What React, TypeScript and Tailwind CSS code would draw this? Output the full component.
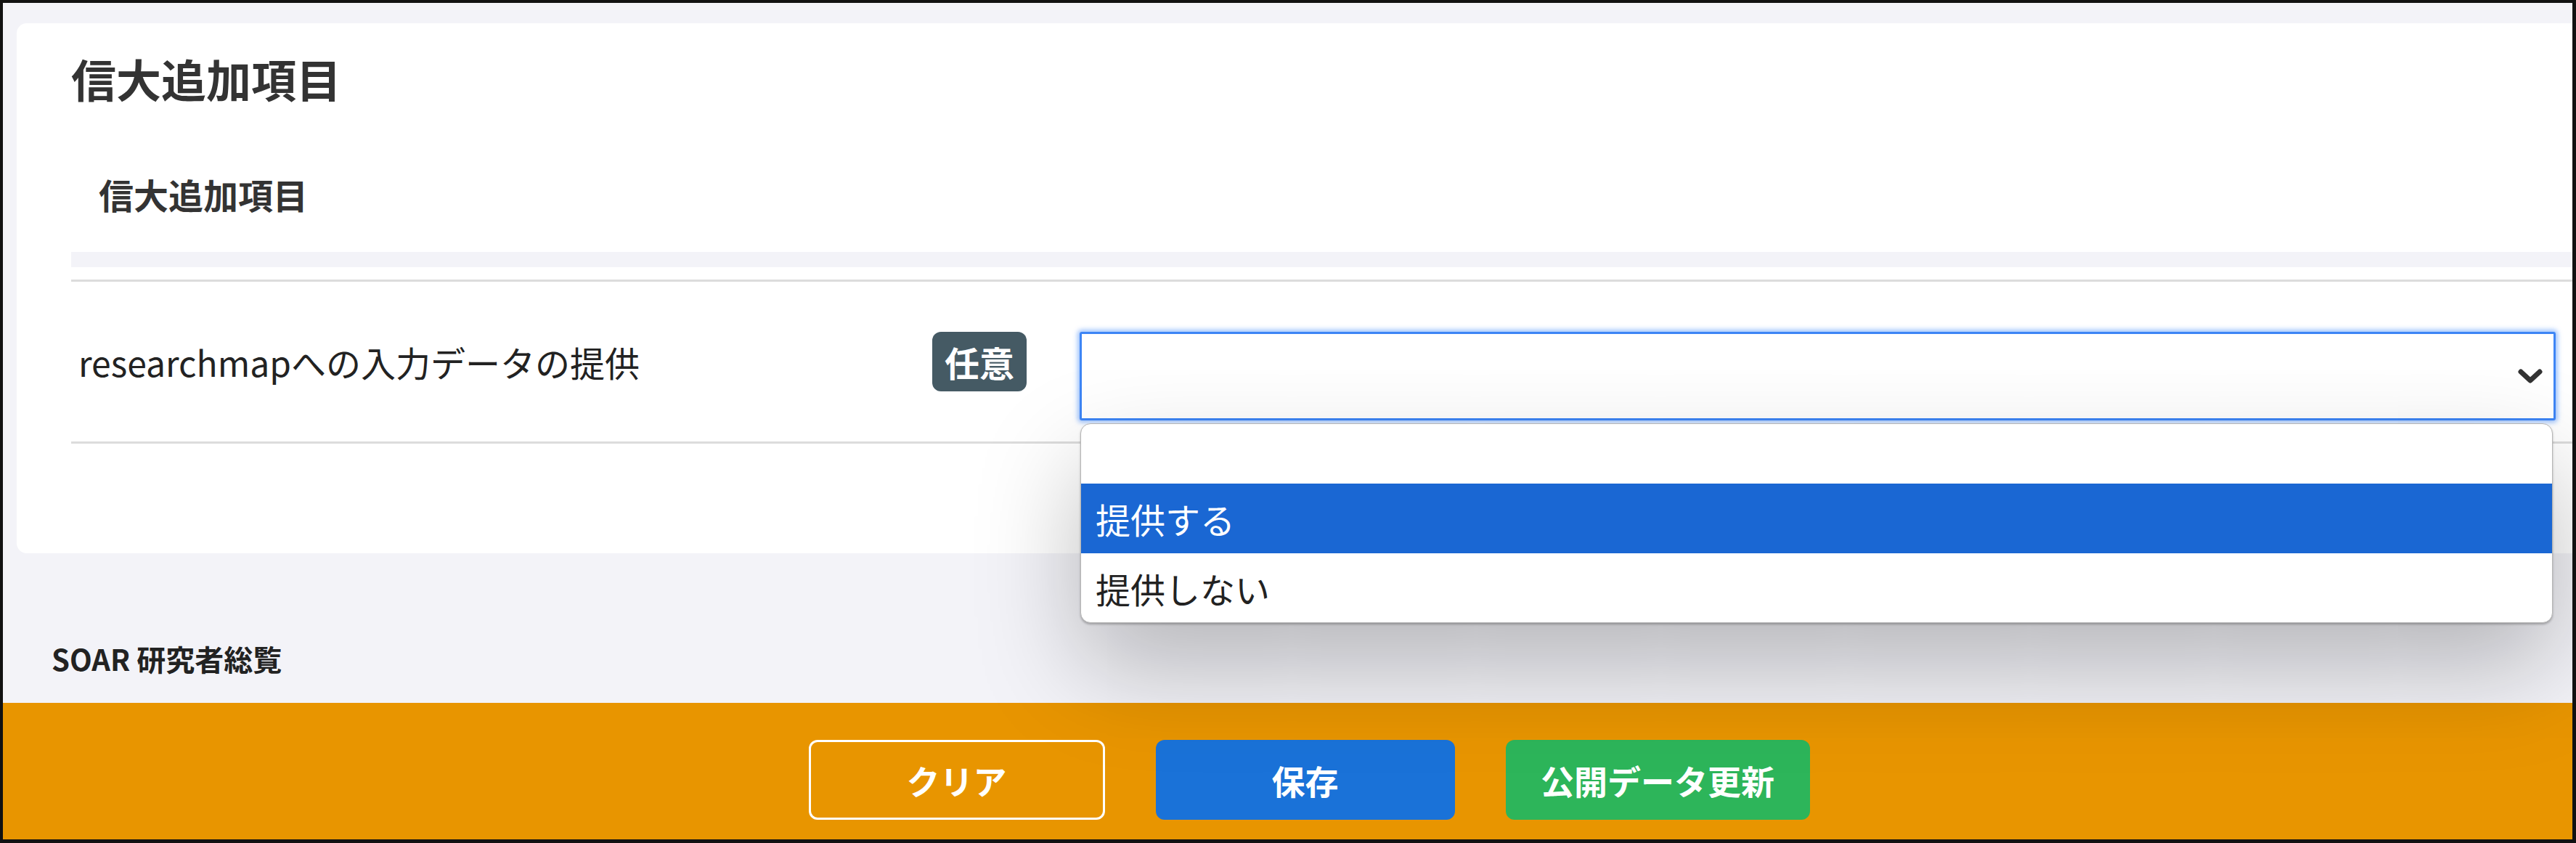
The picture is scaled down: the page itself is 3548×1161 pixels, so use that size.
import React from "react";

function Chevron() {
  return (
    <svg width="36" height="22" viewBox="0 0 36 22" fill="none">
      <polyline points="5,5 18,17 31,5" stroke="#333" strokeWidth="7" strokeLinecap="round" strokeLinejoin="round" />
    </svg>
  );
}

export default function App() {
  return (
    <div className="w-[3548px] h-[1161px] border-t-4 border-l-4 border-r-[5px] border-b-[5px] border-[#111] bg-[#f3f3f8] flex flex-col overflow-hidden font-['Noto_Sans_CJK_JP',sans-serif] text-[#222]">
      <div className="pt-[28px] pl-[19px]">
        <div className="bg-white rounded-l-[14px] h-[730px] pl-[75px] pt-[30px]">
          <h1 className="text-[62px] leading-[92px] font-bold text-[#333]">信大追加項目</h1>
          <h2 className="mt-[77px] pl-[38px] text-[48px] leading-[72px] font-bold text-[#333]">信大追加項目</h2>
          <div className="mt-[44px] h-[21px] bg-[#f3f3f8]" />
          <div className="mt-[17px] h-[3px] bg-[#dcdcdc]" />
          <div className="flex items-start pt-[69px] pb-[29px] pl-[10px] pr-[23px]">
            <div className="w-[1176px] text-[48px] leading-[82px] text-[#222]">researchmapへの入力データの提供</div>
            <div className="w-[130px] h-[82px] rounded-[12px] bg-[#455a64] text-white text-[48px] font-bold flex items-center justify-center">
              任意
            </div>
            <div className="relative ml-[73px] flex-1">
              <div className="h-[122px] border-[3px] border-[#3d85f5] bg-white rounded-[3px] shadow-[0_0_6px_3px_rgba(80,145,250,0.55)] flex items-center justify-end pr-[14px]">
                <Chevron />
              </div>
              <div className="absolute left-[1px] right-[4px] top-[calc(100%+4px)] z-50 bg-white rounded-[14px] border border-[#b5b5b5] overflow-hidden shadow-[0_60px_140px_rgba(0,0,0,0.26),0_2px_3px_rgba(0,0,0,0.25)] text-[48px]">
                <div className="h-[82px]" />
                <div className="h-[96px] bg-[#1a67d3] text-white pl-[20px] flex items-center">提供する</div>
                <div className="h-[95px] pl-[20px] flex items-center text-[#222]">提供しない</div>
              </div>
            </div>
          </div>
          <div className="h-[3px] bg-[#dcdcdc]" />
        </div>
      </div>
      <div className="flex-1 pt-[115px] pl-[67px]">
        <div className="text-[40px] leading-[60px] font-bold text-[#222]">SOAR 研究者総覧</div>
      </div>
      <div className="h-[188px] bg-[#e89500] flex justify-center items-start pt-[51px] pl-[59px] gap-[70px]">
        <button className="w-[408px] h-[110px] border-[3px] border-white rounded-[12px] text-white text-[46px] font-bold flex items-center justify-center">
          クリア
        </button>
        <button className="w-[412px] h-[110px] bg-[#1a72d8] rounded-[12px] text-white text-[46px] font-bold flex items-center justify-center">
          保存
        </button>
        <button className="w-[419px] h-[110px] bg-[#2db55a] rounded-[12px] text-white text-[46px] font-bold flex items-center justify-center">
          公開データ更新
        </button>
      </div>
    </div>
  );
}
